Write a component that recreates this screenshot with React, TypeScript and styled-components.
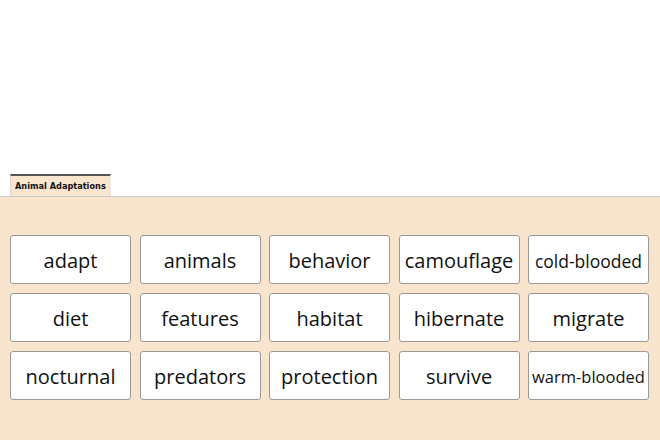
import React from "react";
import styled, { createGlobalStyle } from "styled-components";

const Global = createGlobalStyle`
  html, body { margin: 0; padding: 0; background: #ffffff; }
  body { width: 660px; height: 440px; overflow: hidden; }
`;

const Page = styled.div`
  width: 660px;
  height: 440px;
  display: flex;
  flex-direction: column;
  background: #ffffff;
`;

const TopSpace = styled.div`
  height: 174px;
  flex: none;
`;

const TabBar = styled.div`
  display: flex;
  padding-left: 10px;
  height: 22px;
  flex: none;
`;

const Tab = styled.div`
  background: #fae6cf;
  border-top: 2px solid #555555;
  border-left: 1px solid #d8d8d8;
  border-right: 1px solid #e8e8e8;
  padding: 0 4px;
  display: flex;
  align-items: center;
  font-family: "DejaVu Sans", sans-serif;
  font-weight: bold;
  font-size: 8.2px;
  color: #111111;
  white-space: nowrap;
  box-sizing: border-box;
  height: 22px;
`;

const Panel = styled.div`
  flex: 1;
  background: #f9e5cd;
  border-top: 1px solid #c8c8c8;
  padding: 38px 0 0 10px;
  box-sizing: border-box;
`;

const Grid = styled.div`
  display: grid;
  grid-template-columns: repeat(5, 121px);
  grid-auto-rows: 49px;
  column-gap: 8.5px;
  row-gap: 9px;
`;

const Card = styled.div<{ $size: number }>`
  background: #ffffff;
  border: 1px solid #999999;
  border-radius: 3px;
  box-sizing: border-box;
  display: flex;
  align-items: center;
  justify-content: center;
  padding-top: 2px;
  font-family: "Open Sans", sans-serif;
  font-size: ${(p) => p.$size}px;
  color: #111111;
  white-space: nowrap;
  overflow: hidden;
`;

const words: { w: string; s: number }[] = [
  { w: "adapt", s: 20 },
  { w: "animals", s: 20 },
  { w: "behavior", s: 20 },
  { w: "camouflage", s: 20 },
  { w: "cold-blooded", s: 17.5 },
  { w: "diet", s: 20 },
  { w: "features", s: 20 },
  { w: "habitat", s: 20 },
  { w: "hibernate", s: 20 },
  { w: "migrate", s: 20 },
  { w: "nocturnal", s: 20 },
  { w: "predators", s: 20 },
  { w: "protection", s: 20 },
  { w: "survive", s: 20 },
  { w: "warm-blooded", s: 16.5 },
];

export default function App() {
  return (
    <Page>
      <Global />
      <TopSpace />
      <TabBar>
        <Tab>Animal Adaptations</Tab>
      </TabBar>
      <Panel>
        <Grid>
          {words.map((x) => (
            <Card key={x.w} $size={x.s}>
              {x.w}
            </Card>
          ))}
        </Grid>
      </Panel>
    </Page>
  );
}
